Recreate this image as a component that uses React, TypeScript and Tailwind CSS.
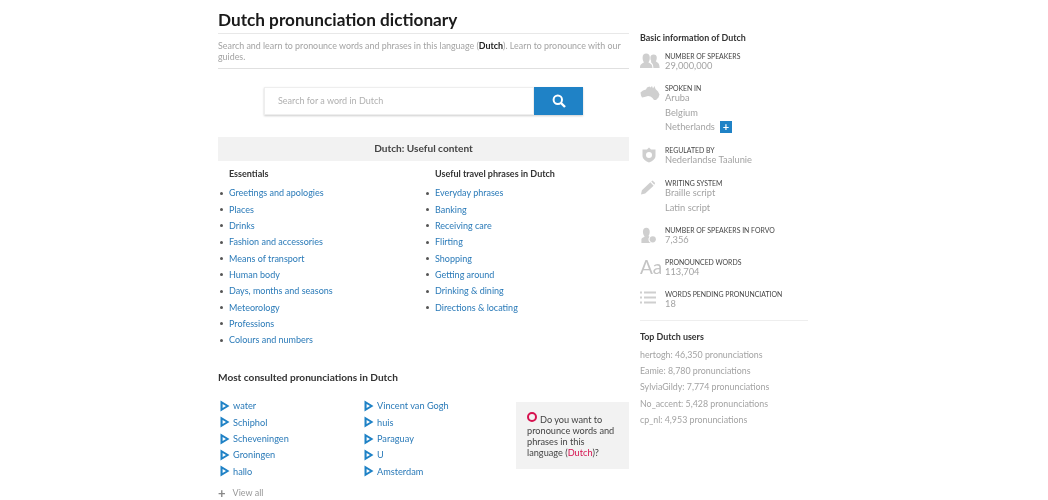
import React from "react";

const col1 = ["Greetings and apologies","Places","Drinks","Fashion and accessories","Means of transport","Human body","Days, months and seasons","Meteorology","Professions","Colours and numbers"];
const col2 = ["Everyday phrases","Banking","Receiving care","Flirting","Shopping","Getting around","Drinking & dining","Directions & locating"];
const pr1 = ["water","Schiphol","Scheveningen","Groningen","hallo"];
const pr2 = ["Vincent van Gogh","huis","Paraguay","U","Amsterdam"];
const users = ["hertogh: 46,350 pronunciations","Eamie: 8,780 pronunciations","SylviaGildy: 7,774 pronunciations","No_accent: 5,428 pronunciations","cp_nl: 4,953 pronunciations"];

function LinkList({ title, items, width }: { title: string; items: string[]; width: string }) {
  return (
    <div className={width}>
      <h3 className="pl-[11px] text-[9px] leading-[13px] font-bold text-[#333] mb-[5px]">{title}</h3>
      <ul>
        {items.map((t) => (
          <li key={t} className="flex items-center h-[16.33px] text-[9px] text-[#2a7ab8]">
            <span className="w-[3px] h-[3px] rounded-full bg-[#555] ml-[2px] mr-[6px]" />
            <span>{t}</span>
          </li>
        ))}
      </ul>
    </div>
  );
}

function Play() {
  return (
    <svg width="10" height="12" viewBox="0 0 10 12" className="shrink-0">
      <path d="M0.5 0.5 L9.5 6 L0.5 11.5 Z M2.6 4 L2.6 8 L6 6 Z" fill="#1f82c6" fillRule="evenodd" />
    </svg>
  );
}

function Pron({ items, width }: { items: string[]; width: string }) {
  return (
    <ul className={width}>
      {items.map((t) => (
        <li key={t} className="flex items-center h-[16.33px] text-[9.2px] text-[#2a7ab8]">
          <span className="ml-[2px] mr-[3px] flex"><Play /></span>
          <span>{t}</span>
        </li>
      ))}
    </ul>
  );
}

const G = "#cfcfcf";
const icons: Record<string, React.ReactNode> = {
  people: (
    <svg width="20" height="16" viewBox="0 0 20 16"><path fill={G} d="M0 15 C0 11 2 10.5 4 9.5 C3 8 2.6 6.5 2.6 4.5 C2.6 2 4 .5 6.2 .5 C8.4 .5 9.8 2 9.8 4.5 C9.8 6.5 9.4 8 8.4 9.5 C10.4 10.5 12.4 11 12.4 15 Z" /><path fill={G} d="M13.4 15 C13.4 12 12.4 10.3 11 9.3 C10.8 8.9 11.2 8.5 11.2 8 C10.6 7 10.4 6 10.4 4.8 C10.4 2.8 11.6 1.6 13.6 1.6 C15.6 1.6 16.8 2.8 16.8 4.8 C16.8 6.2 16.4 7.4 15.8 8.6 C17.6 9.6 19.6 10.2 19.6 15 Z" /></svg>
  ),
  aus: (
    <svg width="20" height="16" viewBox="0 0 20 16"><path fill={G} d="M0.5 7.5 L3 5.5 L6 4.5 L7 2.5 L9.5 1.5 L10.5 2.5 L12 1 L13 3.5 L14.5 1 L15.5 4 L18 6.5 L19.5 9.5 L18.5 12.5 L16 15 L14 15 L12.5 13 L10.5 11.5 L8 11 L4.5 12 L2 12.5 L1 10.5 Z" /></svg>
  ),
  shield: (
    <svg width="16" height="16" viewBox="0 0 14 16" className="ml-[1px]"><path fill={G} fillRule="evenodd" d="M7 0.5 L9 2.5 L13.5 2.5 L13.5 9 C13.5 12 10 14.5 7 15.5 C4 14.5 .5 12 .5 9 L.5 2.5 L5 2.5 Z M7 5 A3 3 0 1 0 7 11 A3 3 0 1 0 7 5 Z" /></svg>
  ),
  pencil: (
    <svg width="16" height="15" viewBox="0 0 16 16"><path fill={G} d="M0.5 15.5 L1.5 11 L10.5 2.5 L14 6 L5 14.5 Z M11.5 1.5 L12.8 .4 L15.6 3.2 L14.8 5 Z" /></svg>
  ),
  user: (
    <svg width="17" height="17" viewBox="0 0 17 18"><path fill={G} d="M1 17 L1 13 C1 11.5 3 11 4.5 10 C3.2 8.5 2.6 7 2.6 5 C2.6 2.4 4 .8 6.2 .8 C8.4 .8 9.8 2.4 9.8 5 C9.8 7 9.2 8.5 8.4 9.6 L9.6 10.4 A4 4 0 0 0 11 17 Z" /><circle cx="13" cy="13" r="3.3" fill={G} /></svg>
  ),
  list: (
    <svg width="16" height="13" viewBox="0 0 16 13"><path fill={G} d="M0 0.5h2v2H0zM4 0.5h12v2H4zM0 5.5h2v2H0zM4 5.5h12v2H4zM0 10.5h2v2H0zM4 10.5h12v2H4z" /></svg>
  ),
};

function Info({ icon, label, values, extra, mb }: { icon: React.ReactNode; label: string; values: string[]; extra?: boolean; mb: string }) {
  return (
    <div className={`flex ${mb}`}>
      <div className="w-[25px] shrink-0 pt-[1px] flex items-start">{icon}</div>
      <div>
        <div className="text-[6.9px] leading-[9px] text-[#444] uppercase">{label}</div>
        {values.map((v, i) => (
          <div key={v} className={`flex items-center text-[9.3px] leading-[9px] h-[9px] text-[#a3a3a3] ${i > 0 ? "mt-[5.5px]" : ""}`}>
            {v}
            {extra && v === "Netherlands" && (
              <span className="ml-[5px] w-[12px] h-[12px] bg-[#1f82c6] text-white flex items-center justify-center text-[11px] font-bold leading-none">+</span>
            )}
          </div>
        ))}
      </div>
    </div>
  );
}

export default function App() {
  return (
    <div className="w-[1048px] h-[500px] overflow-hidden bg-white font-['Lato',sans-serif] pl-[218px] flex gap-[11px] text-[#333] blur-[0.55px]">
      <main className="w-[411px] shrink-0 pt-[9px]">
        <h1 className="text-[17.2px] leading-[22px] font-bold text-[#1a1a1a] pb-[2px] border-b border-[#e8e8e8]">Dutch pronunciation dictionary</h1>
        <p className="text-[8.9px] leading-[11px] text-[#a3a3a3] pt-[6px] pb-[6px] border-b border-[#e0e0e0]">
          Search and learn to pronounce words and phrases in this language (<b className="text-[#222]">Dutch</b>). Learn to pronounce with our guides.
        </p>
        <div className="mt-[18px] ml-[46px] w-[319px] h-[28px] flex shadow-[0_1px_2px_rgba(0,0,0,0.2)]">
          <div className="flex-1 flex items-center pl-[13px] text-[9px] text-[#b0b0b0] border border-[#eee]">Search for a word in Dutch</div>
          <div className="w-[49px] bg-[#1f82c6] flex items-center justify-center">
            <svg width="14" height="14" viewBox="0 0 14 14" fill="none" stroke="#fff"><circle cx="5.8" cy="5.8" r="4.2" strokeWidth="2" /><path d="M9 9 L13 13" strokeWidth="2.4" /></svg>
          </div>
        </div>
        <div className="mt-[22px] h-[24px] bg-[#f2f2f2] flex items-center justify-center text-[10.1px] font-bold text-[#444]">Dutch: Useful content</div>
        <div className="flex mt-[6px] h-[204px]">
          <LinkList title="Essentials" items={col1} width="w-[206px]" />
          <LinkList title="Useful travel phrases in Dutch" items={col2} width="w-[205px]" />
        </div>
        <h3 className="text-[10.1px] leading-[13px] font-bold text-[#333]">Most consulted pronunciations in Dutch</h3>
        <div className="flex mt-[14px]">
          <Pron items={pr1} width="w-[144px]" />
          <Pron items={pr2} width="w-[154px]" />
          <div className="w-[113px] h-[67px] mt-[4px] bg-[#f2f2f2] px-[11px] pt-[10px] text-[9.2px] leading-[11px] text-[#444]">
            <span className="inline-block w-[10px] h-[10px] rounded-full border-[2.5px] border-[#d6124f] mr-[3px] align-[1px]" />
            Do you want to pronounce words and phrases in this language (<span className="text-[#d6124f]">Dutch</span>)?
          </div>
        </div>
        <div className="flex items-center gap-[7px] text-[9px] text-[#999] mt-[5px]">
          <span className="text-[#888] text-[13px] font-bold leading-[16px]">+</span>View all
        </div>
      </main>
      <aside className="w-[168px] shrink-0 pt-[32px]">
        <h3 className="text-[8.9px] leading-[12px] font-bold text-[#333] mb-[8px]">Basic information of Dutch</h3>
        <Info icon={icons.people} label="Number of speakers" values={["29,000,000"]} mb="mb-[14px]" />
        <Info icon={icons.aus} label="Spoken in" values={["Aruba", "Belgium", "Netherlands"]} extra mb="mb-[15px]" />
        <Info icon={icons.shield} label="Regulated by" values={["Nederlandse Taalunie"]} mb="mb-[15px]" />
        <Info icon={icons.pencil} label="Writing system" values={["Braille script", "Latin script"]} mb="mb-[14.5px]" />
        <Info icon={icons.user} label="Number of speakers in Forvo" values={["7,356"]} mb="mb-[14px]" />
        <Info icon={<span className="text-[#c4c4c4] text-[19px] leading-[15px]">Aa</span>} label="Pronounced words" values={["113,704"]} mb="mb-[14px]" />
        <Info icon={icons.list} label="Words pending pronunciation" values={["18"]} mb="mb-[0px]" />
        <div className="border-t border-[#eee] mt-[12px] pt-[10px]">
          <h3 className="text-[8.9px] leading-[12px] font-bold text-[#333] mb-[3px]">Top Dutch users</h3>
          {users.map((u) => (
            <div key={u} className="h-[16.4px] flex items-center text-[8.85px] text-[#a3a3a3]">{u}</div>
          ))}
        </div>
      </aside>
    </div>
  );
}
